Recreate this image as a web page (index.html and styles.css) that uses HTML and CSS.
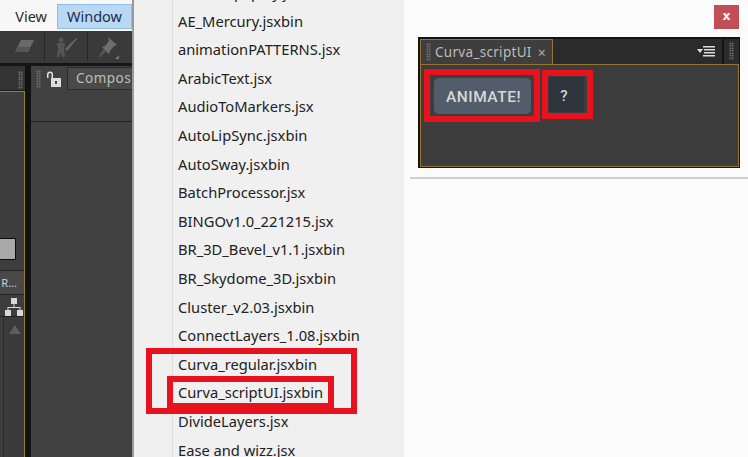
FILE: index.html
```html
<!DOCTYPE html>
<html lang="en">
<head>
    <meta charset="UTF-8">
    <title>Curva_scriptUI</title>
    <link rel="stylesheet" href="styles.css">
</head>
<body>
<div class="shot">

    <div class="app">
        <div class="menubar">
            <span class="menu-item">View</span>
            <span class="menu-item active">Window</span>
        </div>
        <div class="toolbar">
            <svg class="tool-eraser" width="22" height="16" viewBox="0 0 22 16"><path d="M7 1h13l-6 12H1z" fill="#6a6a6a"/><path d="M4 8h12l-3 5H1z" fill="#565656"/></svg>
            <span class="tool-sep"></span>
            <svg class="tool-puppet" width="26" height="22" viewBox="0 0 26 22"><circle cx="8" cy="4" r="2.5" fill="#555"/><path d="M4 7h8l-1 7 1 7H9l-1-5-2 5H4l1-8z" fill="#555"/><path d="M12 13L23 2l1 1-10 12z" fill="#666"/></svg>
            <span class="tool-sep"></span>
            <svg class="tool-pin" width="24" height="24" viewBox="0 0 24 24"><path d="M11 2l9 8-3 1-4 5-1 3-7-7 3-1 4-5z" fill="#6e6e6e"/><path d="M7 14l-5 7 1 1 6-6z" fill="#5a5a5a"/><path d="M22 24h-4l4-4z" fill="#777"/></svg>
        </div>
        <div class="dock">
            <div class="side">
                <div class="side-head"><span class="grip"></span></div>
                <div class="side-body">
                    <div class="swatch"></div>
                    <div class="side-row"><span>R...</span></div>
                    <div class="side-tree">
                        <svg width="18" height="18" viewBox="0 0 18 18"><path d="M6 0h6v6H6zM0 12h6v6H0zM12 12h6v6h-6z" fill="#d8d8d8"/><path d="M8.500 6h1v3h6v3h-1v-2H3.500v2h-1V9h6z" fill="#d8d8d8"/></svg>
                    </div>
                    <div class="side-scroll"><span class="scroll-up"></span></div>
                </div>
            </div>
            <div class="comp">
                <div class="comp-head">
                    <span class="grip"></span>
                    <svg width="16" height="16" viewBox="0 0 16 16"><path d="M1 7V3.500a3 3 0 0 1 6 0V7H5.500V3.500a1.500 1.500 0 0 0-3 0V7z" fill="#e0e0e0"/><path d="M5 7h10v9H5z" fill="#dcdcdc"/><path d="M9 10h2v3H9z" fill="#444"/></svg>
                    <span class="comp-tab">Composi</span>
                </div>
            </div>
        </div>
    </div>

    <div class="menu">
        <ul class="menu-list">
            <li>AE_CompSplay.jsx</li>
            <li>AE_Mercury.jsxbin</li>
            <li>animationPATTERNS.jsx</li>
            <li>ArabicText.jsx</li>
            <li>AudioToMarkers.jsx</li>
            <li>AutoLipSync.jsxbin</li>
            <li>AutoSway.jsxbin</li>
            <li>BatchProcessor.jsx</li>
            <li>BINGOv1.0_221215.jsx</li>
            <li>BR_3D_Bevel_v1.1.jsxbin</li>
            <li>BR_Skydome_3D.jsxbin</li>
            <li>Cluster_v2.03.jsxbin</li>
            <li>ConnectLayers_1.08.jsxbin</li>
            <li>Curva_regular.jsxbin</li>
            <li>Curva_scriptUI.jsxbin</li>
            <li>DivideLayers.jsx</li>
            <li>Ease and wizz.jsx</li>
        </ul>
        <div class="mark mark-outer"></div>
        <div class="mark mark-inner"></div>
    </div>

    <div class="result">
        <div class="close-row"><span class="close-btn">x</span></div>
        <div class="panel">
            <div class="panel-head">
                <div class="panel-tab">
                    <span class="grip"></span>
                    <span class="panel-title">Curva_scriptUI</span>
                    <span class="panel-x">×</span>
                </div>
                <div class="panel-bar">
                    <svg width="18" height="11" viewBox="0 0 18 11"><path d="M0 3h6L3 7z" fill="#ddd"/><path d="M6 0h12v1.500H6zM7 3h11v1.500H7zM7 6h11v1.500H7zM6 9h12v1.500H6z" fill="#ddd"/></svg>
                </div>
                <div class="panel-end"><span class="grip"></span></div>
            </div>
            <div class="panel-body">
                <button class="btn btn-animate">ANIMATE!</button>
                <button class="btn btn-help">?</button>
            </div>
        </div>
        <div class="mark mark-animate"></div>
        <div class="mark mark-help"></div>
        <div class="result-line"></div>
    </div>

</div>
</body>
</html>
```

FILE: styles.css
```css
html, body {
    margin: 0;
    padding: 0;
}
body {
    width: 748px;
    height: 457px;
    overflow: hidden;
    background-color: #fbfbfb;
    font-family: "Noto Sans", "Open Sans", sans-serif;
}
.shot {
    display: grid;
    grid-template-columns: 134px 270px 344px;
    height: 457px;
}

/* left: the app window */
.app {
    display: flex;
    flex-direction: column;
    overflow: hidden;
    border-right: 2px solid #9a9a9a;
    box-sizing: border-box;
}
.menubar {
    display: flex;
    justify-content: flex-end;
    align-items: center;
    gap: 10px;
    height: 31px;
    padding-top: 1px;
    box-sizing: border-box;
    background-color: #f7f7f7;
    font-size: 14.500px;
    color: #2a2a2a;
}
.menu-item.active {
    width: 75px;
    height: 25px;
    line-height: 23px;
    text-align: center;
    box-sizing: border-box;
    background-color: #b9d8f3;
    border: 1px solid #8fbce6;
    color: #1c2c4a;
}
.toolbar {
    display: flex;
    align-items: center;
    height: 32px;
    padding-left: 14px;
    background-color: #3a3a3a;
}
.tool-sep {
    width: 1px;
    height: 28px;
    background-color: #252525;
}
.tool-eraser { margin-right: 8px; }
.tool-puppet { margin: 0 8px 0 8px; }
.tool-pin { margin-left: 9px; }
.dock {
    flex: 1;
    display: flex;
    border-top: 3px solid #161616;
}
.grip {
    display: block;
    width: 5px;
    height: 18px;
    background-image: radial-gradient(#777 45%, transparent 50%);
    background-size: 2.500px 2.500px;
}

.side {
    width: 31px;
    flex-shrink: 0;
    box-sizing: border-box;
    border-right: 6px solid #121212;
    display: flex;
    flex-direction: column;
}
.side-head {
    height: 25px;
    padding: 5px 0 0 18px;
    box-sizing: border-box;
    background-color: #333;
    border-bottom: 1px solid #1c1c1c;
}
.side-body {
    flex: 1;
    display: flex;
    flex-direction: column;
    background-color: #3d3d3d;
    border-top: 1px solid #9a7a35;
    border-right: 1px solid #9a7a35;
}
.swatch {
    width: 16px;
    height: 22px;
    margin-top: 146px;
    box-sizing: border-box;
    background-color: #a9a9a9;
    border: 1px solid #0c0c0c;
    border-left: none;
}
.side-row {
    height: 25px;
    margin-top: 10px;
    box-sizing: border-box;
    background-color: #484848;
    border-top: 1px solid #222;
    border-bottom: 1px solid #222;
    font-size: 11px;
    line-height: 23px;
    color: #d0d0d0;
    text-align: right;
    padding-right: 7px;
}
.side-tree {
    height: 22px;
    padding: 3px 0 0 5px;
    box-sizing: border-box;
    border-bottom: 1px solid #222;
}
.side-scroll {
    flex: 1;
    margin-left: 3px;
    padding: 8px 0 0 5px;
    border-left: 1px solid #2a2a2a;
    background-color: #3a3a3a;
}
.scroll-up {
    display: block;
    width: 0;
    height: 0;
    border-left: 6px solid transparent;
    border-right: 6px solid transparent;
    border-bottom: 9px solid #5e5e5e;
}
.comp {
    flex: 1;
    background-color: #414141;
}
.comp-head {
    display: flex;
    align-items: center;
    gap: 5px;
    height: 56px;
    padding: 3px 0 33px 5px;
    box-sizing: border-box;
    border-bottom: 1px solid #222;
}
.comp-tab {
    flex: 1;
    height: 21px;
    padding-left: 8px;
    line-height: 20px;
    font-size: 13.500px;
    letter-spacing: 0.500px;
    color: #bdbdbd;
    background-color: #4a4a4a;
    border: 1px solid #2c2c2c;
    border-right: none;
    white-space: nowrap;
    overflow: hidden;
}

/* middle: the scripts menu */
.menu {
    position: relative;
    overflow: hidden;
    background-color: #f0f0f0;
}
.menu-list {
    list-style: none;
    margin: -22px 0 0 0;
    padding: 0 0 0 44px;
    background-image: linear-gradient(#dcdcdc, #dcdcdc);
    background-size: 1px 100%;
    background-position: 38px 0;
    background-repeat: no-repeat;
}
.menu-list li {
    height: 28.600px;
    line-height: 28.600px;
    font-size: 14.700px;
    color: #222;
    white-space: nowrap;
}
.mark {
    position: absolute;
    box-sizing: border-box;
    border: 6px solid #e8121f;
}
.mark-outer {
    left: 12px;
    top: 348px;
    width: 211px;
    height: 66px;
}
.mark-inner {
    left: 33px;
    top: 376px;
    width: 167px;
    height: 33px;
}

/* right: the finished panel */
.result {
    position: relative;
    padding: 5px 0 0 14px;
}
.close-row {
    display: flex;
    justify-content: flex-end;
    height: 32px;
    padding-right: 9px;
}
.close-btn {
    width: 25px;
    height: 24px;
    background-color: #c34f56;
    color: #fff;
    font-size: 13px;
    font-weight: bold;
    line-height: 21px;
    text-align: center;
}
.panel {
    width: 322px;
    height: 131px;
    box-sizing: border-box;
    display: flex;
    flex-direction: column;
    background-color: #141414;
    padding: 2px 1px 1px 1px;
}
.panel-head {
    display: flex;
    height: 25px;
}
.panel-tab {
    display: flex;
    align-items: center;
    width: 133px;
    margin-left: 1px;
    padding-left: 5px;
    box-sizing: border-box;
    background-color: #3e3e3e;
    border: 1px solid #94742f;
    border-bottom: none;
    border-right-width: 1.500px;
}
.panel-title {
    margin-left: 4px;
    font-size: 13.500px;
    letter-spacing: 0.300px;
    color: #bcbcbc;
}
.panel-x {
    margin-left: 6px;
    font-size: 14px;
    color: #aaa;
}
.panel-bar {
    flex: 1;
    display: flex;
    justify-content: flex-end;
    align-items: center;
    padding-right: 7px;
    background-color: #2b2b2b;
}
.panel-end {
    width: 15px;
    margin-left: 2px;
    padding: 3px 0 0 5px;
    box-sizing: border-box;
    background-color: #2b2b2b;
}
.panel-body {
    flex: 1;
    display: flex;
    align-items: flex-start;
    margin-left: 1px;
    background-color: #3d3d3d;
    border: 1.500px solid #94742f;
    border-top-width: 1px;
}
.btn {
    border: none;
    padding: 0;
    color: #d8d8d8;
    font-family: Roboto, "Liberation Sans", sans-serif;
    font-weight: 500;
}
.btn-animate {
    width: 97px;
    height: 36px;
    margin: 13px 0 0 13px;
    padding: 1px 0 0 2px;
    border-radius: 5px;
    background-color: #525c6a;
    font-size: 15.500px;
    letter-spacing: 0.500px;
}
.btn-help {
    width: 35px;
    height: 35px;
    margin: 12px 0 0 18px;
    padding: 3px 5px 0 0;
    background-color: #2e343c;
    font-size: 15px;
}
.mark-animate {
    left: 20px;
    top: 69px;
    width: 116px;
    height: 53px;
}
.mark-help {
    left: 138px;
    top: 70px;
    width: 51px;
    height: 49px;
}
.result-line {
    position: absolute;
    left: 6px;
    right: 0;
    top: 177px;
    height: 2px;
    background-color: #cfcfcf;
}
```
